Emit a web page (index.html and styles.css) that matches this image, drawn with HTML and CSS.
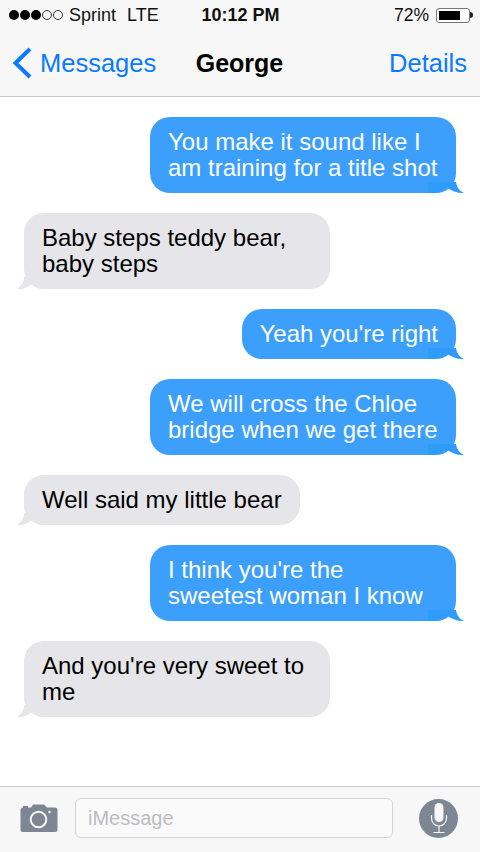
FILE: index.html
```html
<!DOCTYPE html>
<html lang="en">
<head>
    <meta charset="UTF-8">
    <title>George</title>
    <link rel="stylesheet" href="styles.css">
</head>
<body>

<div class="phone">

    <div class="top-bar">
        <div class="status-bar">
            <div class="status-left">
                <span class="signal">
                    <i class="dot"></i><i class="dot"></i><i class="dot"></i><i class="dot empty"></i><i class="dot empty"></i>
                </span>
                <span class="carrier">Sprint</span>
                <span class="network">LTE</span>
            </div>
            <div class="clock">10:12 PM</div>
            <div class="status-right">
                <span>72%</span>
                <span class="battery"><span class="battery-level"></span></span>
                <span class="battery-tip"></span>
            </div>
        </div>

        <div class="nav-bar">
            <a class="back-link">
                <svg class="chevron" width="20" height="32" viewBox="0 0 20 32">
                    <path d="M18 2 L3.500 16 L18 30" fill="none" stroke="#0a7aff" stroke-width="4"/>
                </svg>
                Messages
            </a>
            <div class="contact">George</div>
            <a class="details-link">Details</a>
        </div>
    </div>

    <div class="messages">
        <div class="bubble sent">You make it sound like I am training for a title shot
            <svg class="tail" width="37" height="14" viewBox="0 0 37 14"><path d="M0 1 H28 C28.500 5 31 10 36 12 C30 12.500 24 10 18.700 6.700 C15 9 10 12 2 12 H0 Z" fill="#2f9bfb"/></svg>
        </div>
        <div class="bubble received">Baby steps teddy bear, baby steps
            <svg class="tail" width="32" height="14" viewBox="0 0 32 14"><path d="M8 0 C8 5 5 10 0.500 12.300 C7 12.800 12 10 17 6 C20 9 24 12 32 12 V0 Z" fill="#e5e5ea"/></svg>
        </div>
        <div class="bubble sent">Yeah you're right
            <svg class="tail" width="37" height="14" viewBox="0 0 37 14"><path d="M0 1 H28 C28.500 5 31 10 36 12 C30 12.500 24 10 18.700 6.700 C15 9 10 12 2 12 H0 Z" fill="#2f9bfb"/></svg>
        </div>
        <div class="bubble sent">We will cross the Chloe bridge when we get there
            <svg class="tail" width="37" height="14" viewBox="0 0 37 14"><path d="M0 1 H28 C28.500 5 31 10 36 12 C30 12.500 24 10 18.700 6.700 C15 9 10 12 2 12 H0 Z" fill="#2f9bfb"/></svg>
        </div>
        <div class="bubble received">Well said my little bear
            <svg class="tail" width="32" height="14" viewBox="0 0 32 14"><path d="M8 0 C8 5 5 10 0.500 12.300 C7 12.800 12 10 17 6 C20 9 24 12 32 12 V0 Z" fill="#e5e5ea"/></svg>
        </div>
        <div class="bubble sent">I think you're the sweetest woman I know
            <svg class="tail" width="37" height="14" viewBox="0 0 37 14"><path d="M0 1 H28 C28.500 5 31 10 36 12 C30 12.500 24 10 18.700 6.700 C15 9 10 12 2 12 H0 Z" fill="#2f9bfb"/></svg>
        </div>
        <div class="bubble received">And you're very sweet to me
            <svg class="tail" width="32" height="14" viewBox="0 0 32 14"><path d="M8 0 C8 5 5 10 0.500 12.300 C7 12.800 12 10 17 6 C20 9 24 12 32 12 V0 Z" fill="#e5e5ea"/></svg>
        </div>
    </div>

    <div class="input-bar">
        <svg class="camera" width="38" height="30" viewBox="0 0 38 30">
            <path d="M3 3 H8 V4.500 H11 L13 1.500 H24 L27 4.500 H35 Q37.500 4.500 37.500 7 V26.500 Q37.500 29 35 29 H3 Q0.500 29 0.500 26.500 V7 Q0.500 4.500 3 4.500 Z" fill="#7d8794"/>
            <circle cx="18.500" cy="16.500" r="7.800" fill="none" stroke="#f7f7f7" stroke-width="2"/>
            <circle cx="29.500" cy="9" r="1.200" fill="#f7f7f7"/>
        </svg>
        <div class="message-input">iMessage</div>
        <div class="mic-btn">
            <svg width="18" height="32" viewBox="0 0 18 32">
                <rect x="4.500" y="1" width="9" height="19" rx="4.500" fill="#f7f7f7"/>
                <path d="M1.500 13 V16 C1.500 20.500 4.500 24 9 24 C13.500 24 16.500 20.500 16.500 16 V13 M9 24 V30 M3.500 30.500 H14.500" fill="none" stroke="#f7f7f7" stroke-width="1.200"/>
            </svg>
        </div>
    </div>

</div>

</body>
</html>
```

FILE: styles.css
```css
* {
    box-sizing: border-box;
}

body {
    margin: 0;
    font-family: "Liberation Sans", Arial, sans-serif;
    background-color: #fff;
}

.phone {
    display: flex;
    flex-direction: column;
    width: 480px;
    height: 852px;
    overflow: hidden;
}

.top-bar {
    height: 97px;
    padding-top: 3px;
    background-color: #f7f7f7;
    border-bottom: 1px solid #c8c8cc;
}

.status-bar {
    display: grid;
    grid-template-columns: 1fr auto 1fr;
    align-items: center;
    height: 24px;
    padding: 0 8px 0 9px;
    font-size: 18px;
    color: #111;
}

.status-left {
    display: flex;
    align-items: center;
}

.signal {
    display: flex;
    gap: 1px;
    margin-right: 6px;
}

.dot {
    width: 10px;
    height: 10px;
    border-radius: 50%;
    background-color: #000;
}

.dot.empty {
    background-color: transparent;
    border: 1px solid #333;
}

.network {
    margin-left: 11px;
}

.clock {
    font-weight: bold;
}

.status-right {
    display: flex;
    align-items: center;
    justify-content: flex-end;
    font-size: 17.500px;
}

.battery {
    display: block;
    width: 34px;
    height: 15px;
    margin-left: 7px;
    padding: 2px;
    background-color: #fff;
    border: 1px solid #777;
    border-radius: 3px;
}

.battery-level {
    display: block;
    width: 74%;
    height: 100%;
    background-color: #000;
}

.battery-tip {
    width: 3px;
    height: 6px;
    margin-right: -1px;
    background-color: #222;
    border-radius: 0 3px 3px 0;
}

.nav-bar {
    display: grid;
    grid-template-columns: 1fr auto 1fr;
    align-items: center;
    height: 69px;
    padding: 3px 13px 0 12px;
    font-size: 25.500px;
    color: #0a7aff;
}

.back-link {
    display: flex;
    align-items: center;
    gap: 8px;
}

.contact {
    font-size: 25px;
    font-weight: bold;
    color: #000;
}

.details-link {
    text-align: right;
}

.messages {
    flex: 1;
    display: flex;
    flex-direction: column;
    gap: 20px;
    padding: 20px 24px 0;
}

.bubble {
    position: relative;
    max-width: 306px;
    padding: 12px 18px;
    font-size: 24px;
    line-height: 26px;
    border-radius: 20px;
}

.sent {
    align-self: flex-end;
    background-color: #3b9ffb;
    color: #fff;
}

.received {
    align-self: flex-start;
    background-color: #e5e5ea;
    color: #000;
}

.tail {
    position: absolute;
    bottom: -2px;
}

.sent .tail {
    right: -9px;
}

.received .tail {
    left: -8px;
}

.input-bar {
    display: flex;
    align-items: center;
    height: 66px;
    padding: 0 22px 3px 20px;
    background-color: #f7f7f7;
    border-top: 1px solid #c4c8cf;
}

.camera {
    flex: none;
}

.message-input {
    flex: 1;
    height: 40px;
    margin: 0 26px 0 17px;
    padding: 0 12px;
    font-size: 20px;
    line-height: 38px;
    color: #bcbcc2;
    background-color: #fafafa;
    border: 1px solid #d4d4d6;
    border-radius: 6px;
}

.mic-btn {
    display: flex;
    align-items: center;
    justify-content: center;
    flex: none;
    width: 39px;
    height: 39px;
    background-color: #7d8794;
    border-radius: 50%;
}
```
